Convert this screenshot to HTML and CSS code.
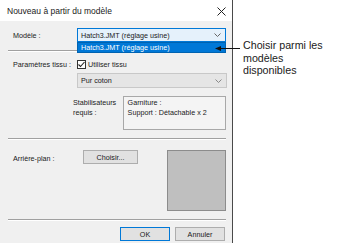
FILE: index.html
```html
<!DOCTYPE html>
<html lang="fr">
<head>
    <meta charset="UTF-8">
    <title>Nouveau à partir du modèle</title>
    <link rel="stylesheet" href="styles.css">
</head>
<body>
    <div class="page">
        <div class="dialog">
            <div class="titlebar">
                <span class="title">Nouveau à partir du modèle</span>
                <svg class="close" width="9" height="9" viewBox="0 0 9 9">
                    <path d="M0.5 0.5 L8.5 8.5 M8.5 0.5 L0.5 8.5" stroke="#222" stroke-width="1"/>
                </svg>
            </div>
            <div class="content">
                <div class="row model-row">
                    <span class="label">Modèle :</span>
                    <div class="select select-open">
                        <span>Hatch3.JMT (réglage usine)</span>
                        <svg class="chev" width="7" height="4" viewBox="0 0 7 4"><path d="M0.5 0.5 L3.5 3.5 L6.5 0.5" fill="none" stroke="#666"/></svg>
                        <div class="droplist">Hatch3.JMT (réglage usine)</div>
                    </div>
                </div>
                <div class="sep sep-first"></div>

                <div class="row fabric-row">
                    <span class="label">Paramètres tissu :</span>
                    <label class="check">
                        <span class="box">
                            <svg width="9" height="9" viewBox="0 0 9 9"><path d="M1.5 4.5 L3.5 6.5 L7.5 2" fill="none" stroke="#222" stroke-width="1.1"/></svg>
                        </span>
                        Utiliser tissu
                    </label>
                </div>
                <div class="select select-grey">
                    <span>Pur coton</span>
                    <svg class="chev" width="7" height="4" viewBox="0 0 7 4"><path d="M0.5 0.5 L3.5 3.5 L6.5 0.5" fill="none" stroke="#888"/></svg>
                </div>
                <div class="stab-row">
                    <span class="stab-label">Stabilisateurs requis :</span>
                    <div class="stab-box">
                        Garniture :<br>
                        Support : Détachable x 2
                    </div>
                </div>
                <div class="sep sep-mid"></div>

                <div class="row bg-row">
                    <span class="label bg-label">Arrière-plan :</span>
                    <button class="btn choose">Choisir...</button>
                    <div class="preview"></div>
                </div>
                <div class="sep sep-last"></div>

                <div class="actions">
                    <button class="btn btn-ok">OK</button>
                    <button class="btn">Annuler</button>
                </div>
            </div>
        </div>

        <div class="note">
            <svg class="arrow" width="25" height="7" viewBox="0 0 25 7">
                <path d="M0 3.5 L6 1 L6 6 Z" fill="#111"/>
                <path d="M5 3.5 L25 3.5" stroke="#111" stroke-width="1"/>
            </svg>
            Choisir parmi les<br>modèles<br>disponibles
        </div>
    </div>
</body>
</html>
```
FILE: styles.css
```css
body {
    margin: 0;
    background: #fff;
    font-family: "Liberation Sans", Arial, sans-serif;
}

.page {
    display: flex;
    align-items: flex-start;
}

.dialog {
    width: 232px;
    height: 243px;
    background: #f0f0f0;
    border-right: 1px solid #4a4a4a;
    font-size: 7.2px;
    color: #1a1a1a;
    display: flex;
    flex-direction: column;
}

.titlebar {
    height: 21px;
    background: #fff;
    display: flex;
    align-items: center;
    justify-content: space-between;
    padding: 0 6px 0 7px;
    font-size: 8.5px;
    flex-shrink: 0;
}

.close {
    margin-top: 1px;
}

.content {
    padding: 0 6px 0 8px;
}

.row {
    display: flex;
    align-items: center;
}

.label {
    width: 64px;
    padding-left: 5px;
    flex-shrink: 0;
}

.model-row {
    margin-top: 7px;
}

.select {
    position: relative;
    width: 149px;
    height: 14px;
    box-sizing: border-box;
    display: flex;
    align-items: center;
    justify-content: space-between;
    padding: 0 4px 0 3px;
}

.select-open {
    background: #e5f1fb;
    border: 1px solid #0078d7;
}

.select-grey {
    margin: 4px 0 0 69px;
    height: 15px;
    width: 150px;
    background: #e5e5e5;
    border: 1px solid #c8c8c8;
}

.droplist {
    /* dropdown list hangs over the separator below */
    position: absolute;
    left: -1px;
    top: 13px;
    width: 149px;
    height: 11px;
    box-sizing: border-box;
    background: #0078d7;
    color: #fff;
    padding-left: 3px;
    line-height: 10px;
    border: 1px solid #0063b1;
}

.sep {
    height: 1px;
    background: #a0a0a0;
    border-bottom: 1px solid #fff;
}

.sep-first {
    margin-top: 8px;
}

.fabric-row {
    margin-top: 7px;
    height: 10px;
}

.check {
    display: flex;
    align-items: center;
    gap: 2px;
}

.box {
    width: 9px;
    height: 9px;
    box-sizing: border-box;
    border: 1px solid #333;
    background: #fff;
    display: flex;
    align-items: center;
    justify-content: center;
}

.box svg {
    flex-shrink: 0;
}

.stab-row {
    display: flex;
    margin-top: 8px;
    height: 34px;
}

.stab-label {
    margin-left: 65px;
    width: 51px;
    line-height: 10px;
    padding-top: 2px;
}

.stab-box {
    width: 106px;
    box-sizing: border-box;
    border: 1px solid #a8a8a8;
    background: #f4f4f4;
    padding: 1px 4px;
    line-height: 10px;
}

.sep-mid {
    margin-top: 8px;
}

.bg-row {
    margin-top: 10px;
    align-items: flex-start;
}

.bg-label {
    margin-top: 4px;
}

.btn {
    font-family: inherit;
    font-size: 7.2px;
    color: #1a1a1a;
    background: #e1e1e1;
    border: 1px solid #adadad;
    height: 14px;
    padding: 0;
    margin: 0;
}

.choose {
    width: 56px;
    margin-left: 6px;
}

.preview {
    width: 60px;
    height: 61px;
    box-sizing: border-box;
    margin-left: 29px;
    background: #bfbfbf;
    border: 1px solid #8c8c8c;
}

.sep-last {
    margin-top: 8px;
}

.actions {
    display: flex;
    justify-content: flex-end;
    gap: 5px;
    margin-top: 6px;
    padding-right: 1px;
}

.actions .btn {
    width: 50px;
}

.btn-ok {
    border-color: #0078d7;
}

.note {
    position: relative;
    margin: 39px 0 0 10px;
    font-size: 10.7px;
    line-height: 12.6px;
    color: #1a1a1a;
}

.arrow {
    /* pointer reaches back over the dialog */
    position: absolute;
    left: -28px;
    top: 6px;
}
```
